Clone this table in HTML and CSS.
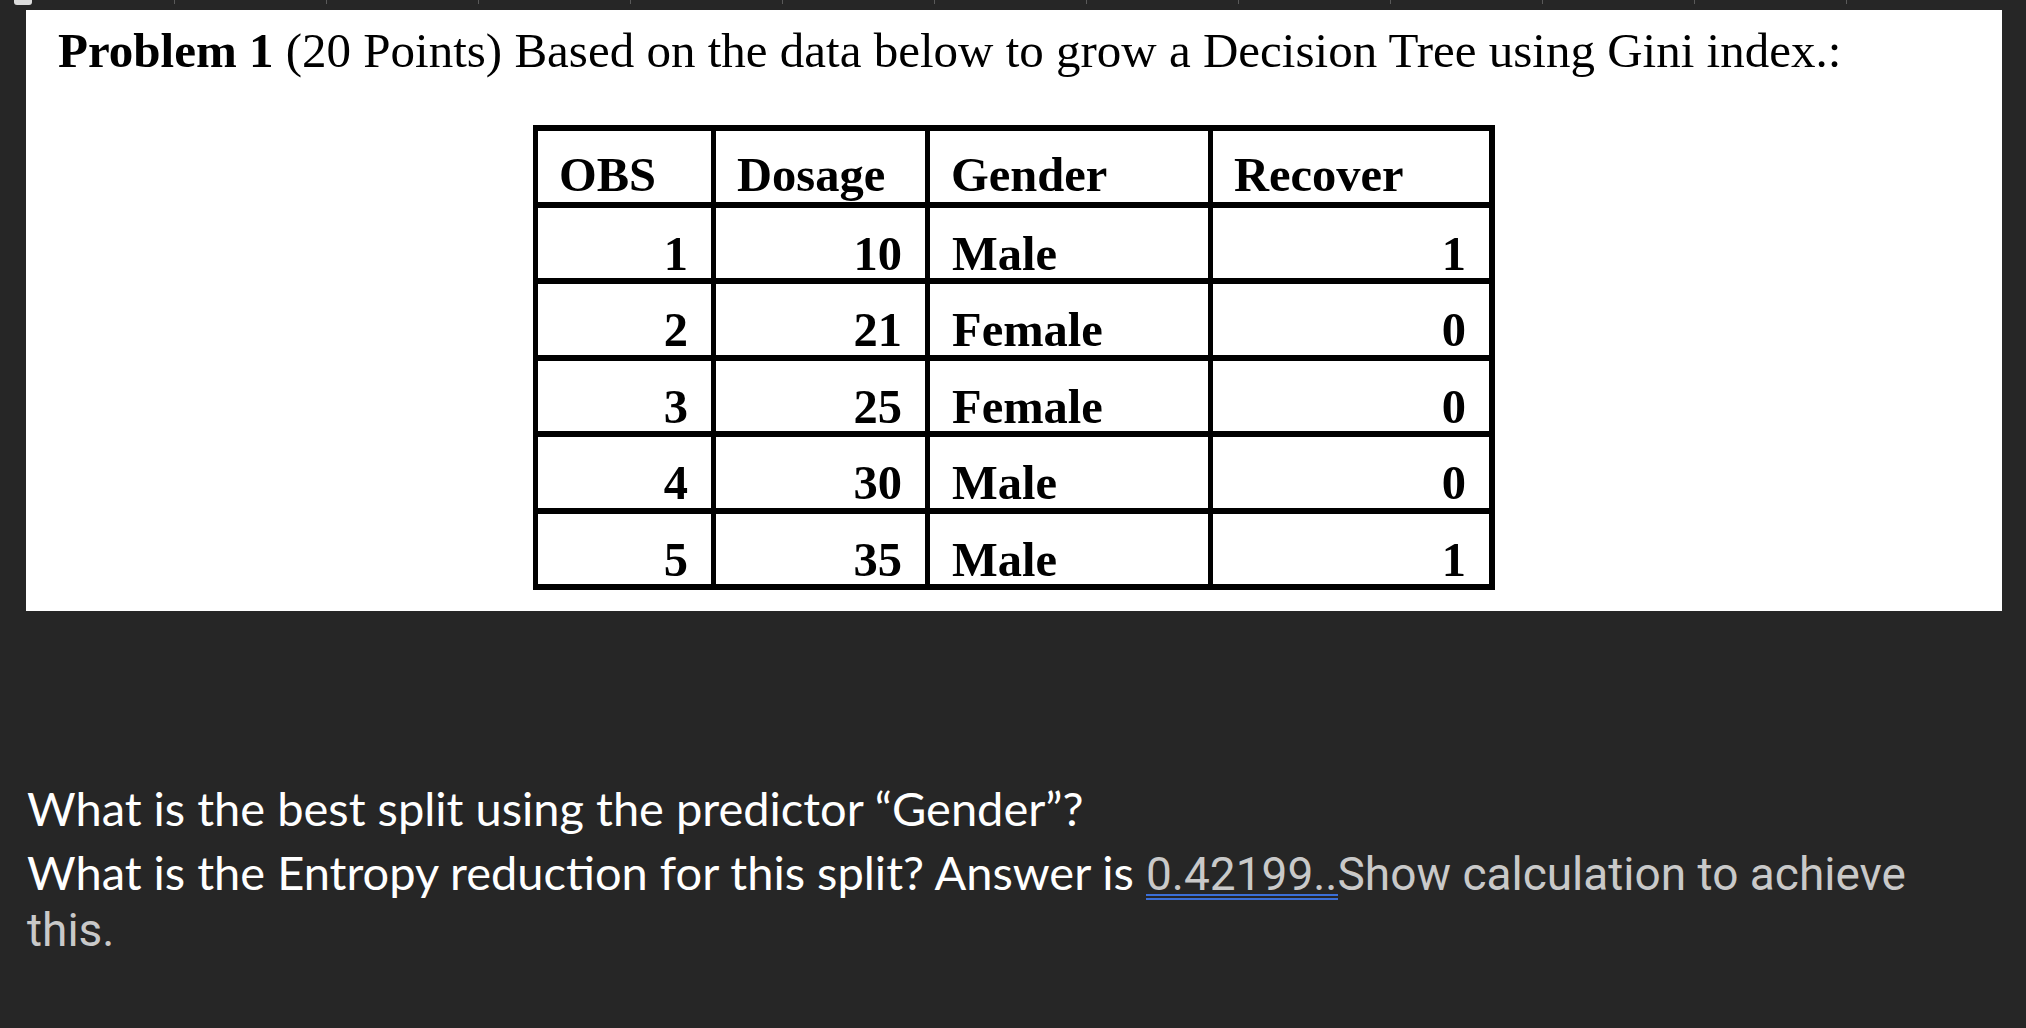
FILE: index.html
```html
<!DOCTYPE html>
<html lang="en">
<head>
<meta charset="utf-8">
<title>Problem 1</title>
<link rel="stylesheet" href="styles.css">
</head>
<body>
<div class="topbar"><span class="handle"></span></div>
<main class="sheet">
  <h1 class="title"><b>Problem 1</b> (20 Points) Based on the data below to grow a Decision Tree using Gini index.:</h1>
  <div class="datatable">
    <div class="cell head">OBS</div>
    <div class="cell head">Dosage</div>
    <div class="cell head">Gender</div>
    <div class="cell head">Recover</div>

    <div class="cell num">1</div>
    <div class="cell num">10</div>
    <div class="cell txt">Male</div>
    <div class="cell num">1</div>

    <div class="cell num">2</div>
    <div class="cell num">21</div>
    <div class="cell txt">Female</div>
    <div class="cell num">0</div>

    <div class="cell num">3</div>
    <div class="cell num">25</div>
    <div class="cell txt">Female</div>
    <div class="cell num">0</div>

    <div class="cell num">4</div>
    <div class="cell num">30</div>
    <div class="cell txt">Male</div>
    <div class="cell num">0</div>

    <div class="cell num">5</div>
    <div class="cell num">35</div>
    <div class="cell txt">Male</div>
    <div class="cell num">1</div>
  </div>
</main>
<section class="question">
  <p class="q1">What is the best split using the predictor “Gender”?</p>
  <p class="q2">What is the Entropy reduction for this split? Answer is <span class="note"><span class="spell">0.42199..</span>Show calculation to achieve<br>this.</span></p>
</section>
</body>
</html>
```
FILE: styles.css
```css
html, body {
  margin: 0;
  padding: 0;
  background: #262626;
}

body {
  width: 2026px;
  height: 1028px;
  overflow: hidden;
}

.topbar {
  height: 10px;
  display: flex;
  align-items: flex-start;
  background-image: repeating-linear-gradient(to right, #5a5a5a 0 1px, transparent 1px 152px);
  background-position: 174px 0;
  background-size: 1700px 4px;
  background-repeat: no-repeat;
}

.handle {
  display: block;
  width: 18px;
  height: 5px;
  margin-left: 14px;
  background: #dcdcdc;
  border-radius: 0 0 3px 3px;
}

.sheet {
  margin-left: 26px;
  width: 1976px;
  height: 601px;
  background: #ffffff;
  padding-top: 13px;
  box-sizing: border-box;
}

.title {
  margin: 0;
  padding-left: 32px;
  font-family: "Liberation Serif", "Times New Roman", serif;
  font-size: 49px;
  font-weight: normal;
  line-height: 1.15;
  color: #000;
  white-space: nowrap;
}

.title b {
  font-weight: bold;
}

.datatable {
  display: grid;
  grid-template-columns: 173px 209px 278px 276px;
  grid-auto-rows: 70.5px;
  gap: 6px 5px;
  padding: 6px 6px 6px 5px;
  background: #000;
  width: max-content;
  margin: 46px auto 0;
  font-family: "Liberation Serif", "Times New Roman", serif;
  font-weight: bold;
  font-size: 48.5px;
  line-height: 1;
  color: #000;
}

.cell {
  background: #fff;
  display: flex;
  align-items: flex-end;
}

.head {
  padding: 0 0 2px 21px;
}

.txt {
  padding: 0 0 0 22px;
}

.num {
  justify-content: flex-end;
  padding: 0 23px 0 0;
}

.question {
  padding-left: 27px;
  font-family: Lato, "Open Sans", sans-serif;
  font-size: 47px;
  color: #ffffff;
}

.q1 {
  margin: 172px 0 0;
  line-height: 50px;
}

.q2 {
  margin: 12px 0 0;
  line-height: 54px;
}

.note {
  font-family: Roboto, "Noto Sans", sans-serif;
  font-size: 46px;
  color: #c9c9c9;
}

.spell {
  background-image:
    linear-gradient(#3b6fd8, #3b6fd8),
    linear-gradient(#3b6fd8, #3b6fd8);
  background-size: 100% 2px, 100% 2px;
  background-position: 0 46.5px, 0 51px;
  background-repeat: no-repeat;
}
```
